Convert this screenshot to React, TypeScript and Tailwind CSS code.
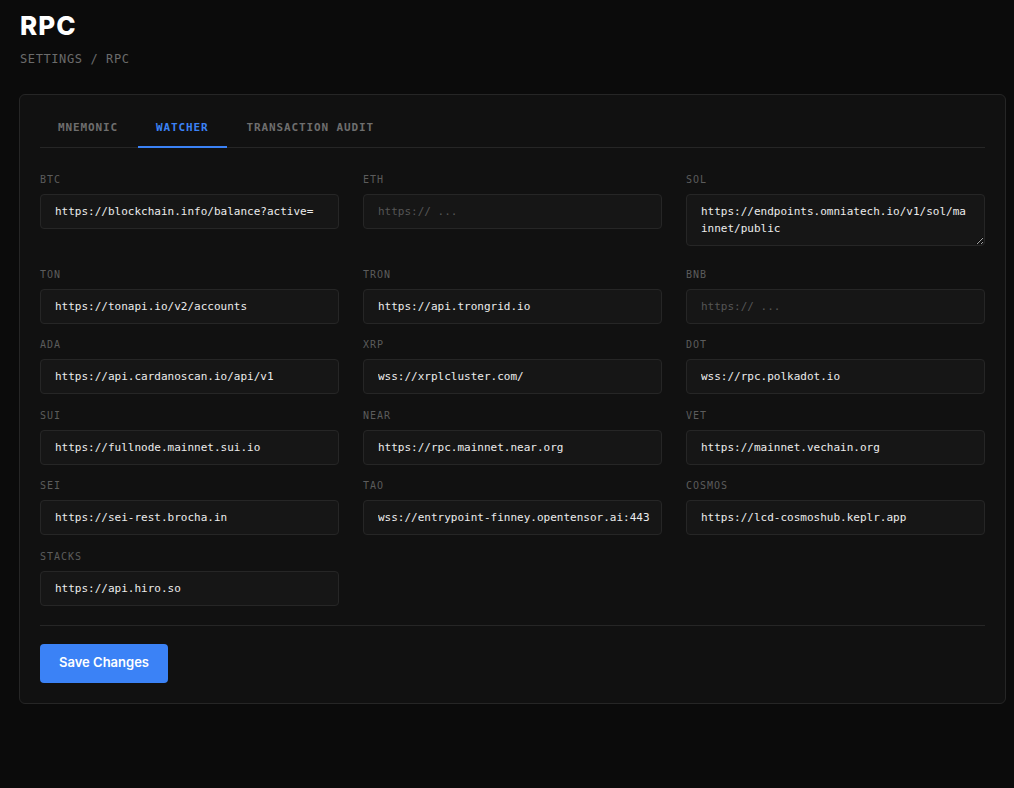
import { useState } from "react";

const mono = "font-['DejaVu_Sans_Mono','Liberation_Mono',monospace]";

interface rpcField {
  name: string;
  value: string;
  multiline?: boolean;
}

const fields: Array<rpcField> = [
  { name: "BTC", value: "https://blockchain.info/balance?active=" },
  { name: "ETH", value: "" },
  { name: "SOL", value: "https://endpoints.omniatech.io/v1/sol/mainnet/public", multiline: true },
  { name: "TON", value: "https://tonapi.io/v2/accounts" },
  { name: "TRON", value: "https://api.trongrid.io" },
  { name: "BNB", value: "" },
  { name: "ADA", value: "https://api.cardanoscan.io/api/v1" },
  { name: "XRP", value: "wss://xrplcluster.com/" },
  { name: "DOT", value: "wss://rpc.polkadot.io" },
  { name: "SUI", value: "https://fullnode.mainnet.sui.io" },
  { name: "NEAR", value: "https://rpc.mainnet.near.org" },
  { name: "VET", value: "https://mainnet.vechain.org" },
  { name: "SEI", value: "https://sei-rest.brocha.in" },
  { name: "TAO", value: "wss://entrypoint-finney.opentensor.ai:443" },
  { name: "COSMOS", value: "https://lcd-cosmoshub.keplr.app" },
  { name: "STACKS", value: "https://api.hiro.so" },
];

const tabs = ["MNEMONIC", "WATCHER", "TRANSACTION AUDIT"];

const Field = ({ field }: { field: rpcField }) => {
  const [value, setValue] = useState(field.value);
  const base =
    "w-full rounded-[4px] border border-[#262626] bg-[#161616] pl-[14px] text-[11px] text-[#ececec] placeholder:text-[#555] outline-none " +
    mono;

  return (
    <div className={field.multiline ? "pb-[7px]" : ""}>
      <div className={`mb-[7px] text-[10px] leading-[14px] tracking-[0.1em] text-[#5c5c5c] ${mono}`}>
        {field.name}
      </div>
      {field.multiline ? (
        <textarea
          value={value}
          onChange={(e) => setValue(e.target.value)}
          rows={2}
          className={`${base} block h-[52px] resize-y py-2 pr-[14px] leading-[17px]`}
        />
      ) : (
        <input
          value={value}
          onChange={(e) => setValue(e.target.value)}
          placeholder="https:// ..."
          className={`${base} block h-[35px] pr-2`}
        />
      )}
    </div>
  );
};

export default function App() {
  const [tab, setTab] = useState("WATCHER");

  return (
    <div className="min-h-[788px] bg-[#0b0b0b] pt-3 pr-2 pb-10 pl-[19px]">
      <h1 className="ml-px font-['Inter',sans-serif] text-[26px] leading-[28px] font-extrabold tracking-[0.04em] text-white">
        RPC
      </h1>
      <div className={`mt-[11px] ml-px text-[12px] leading-4 tracking-[0.05em] text-[#6b6b6b] ${mono}`}>
        SETTINGS / RPC
      </div>

      <div className="mt-[27px] rounded-md border border-[#262626] bg-[#111111] px-5 pt-[13px] pb-5">
        <div className="flex gap-[2px] border-b border-[#262626]">
          {tabs.map((t) => (
            <button
              key={t}
              onClick={() => setTab(t)}
              className={
                tab === t
                  ? `-mb-px flex h-10 items-center border-b-2 border-[#3b82f6] px-[18px] pt-[2px] text-[11px] font-bold tracking-[0.08em] text-[#3b82f6] ${mono}`
                  : `-mb-px flex h-10 items-center border-b-2 border-transparent px-[18px] pt-[2px] text-[11px] font-bold tracking-[0.08em] text-[#6e6e6e] ${mono}`
              }
            >
              {t}
            </button>
          ))}
        </div>

        <div className="mt-[25px] grid grid-cols-3 gap-x-6 gap-y-[14.5px]">
          {fields.map((f) => (
            <Field key={f.name} field={f} />
          ))}
        </div>

        <div className="mt-[19px] border-t border-[#262626] pt-[18px]">
          <button className="h-[39px] rounded-[4px] bg-[#3b82f6] px-[19px] font-['Inter',sans-serif] text-[13px] font-semibold text-white">
            Save Changes
          </button>
        </div>
      </div>
    </div>
  );
}
